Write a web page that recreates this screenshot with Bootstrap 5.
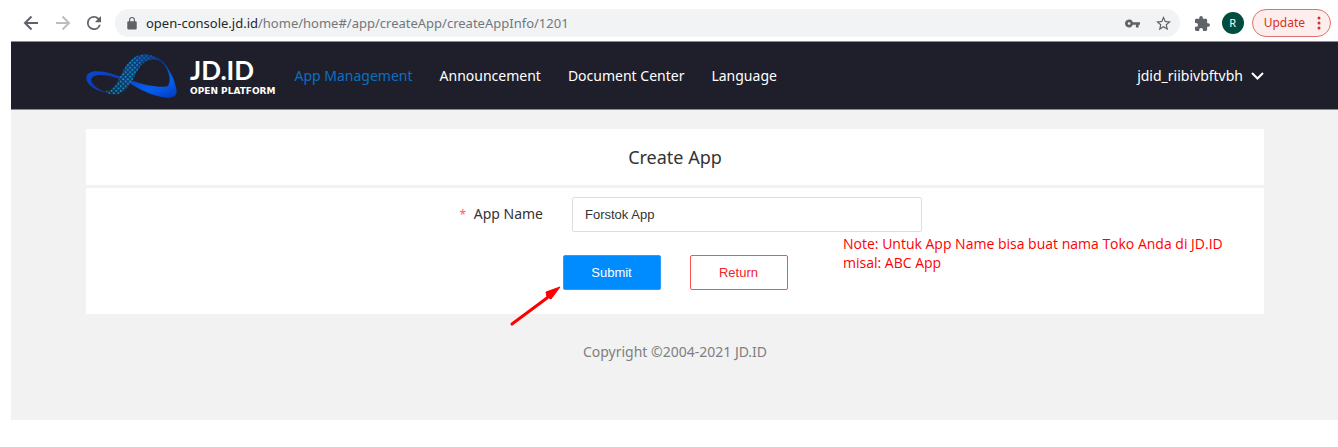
<!DOCTYPE html>
<html lang="en">
<head>
<meta charset="utf-8">
<meta name="viewport" content="width=device-width, initial-scale=1">
<title>Create App - JD.ID Open Platform</title>
<link href="https://cdn.jsdelivr.net/npm/bootstrap@5.3.0/dist/css/bootstrap.min.css" rel="stylesheet">
<style>
  body { font-family: "Noto Sans", "Open Sans", sans-serif; font-size: 14px; line-height: 20px; color: #333; background: #fff; }
  svg { display: block; flex: none; }
  .browser-bar { height: 41px; padding: 5px 7px 0 23px; color: #5f6368; }
  .icon-btn { border: 0; background: none; padding: 0; color: inherit; }
  .icon-btn.dim { color: #bcbec1; }
  .omnibox { height: 28px; background: #f1f3f4; border-radius: 14px; padding: 0 9px 0 11px; }
  .reload { margin-right: 14px; }
  .url-text { font-size: 13px; color: #73777b; }
  .url-text b { font-weight: 400; color: #25282c; }
  .ext-btn { margin: 0 12px 0 15px; }
  .avatar { width: 22px; height: 22px; background: #004d40; color: #fff; font-size: 11px; }
  .update-btn { height: 28px; border: 1px solid #e2706a; border-radius: 14px; background: #fceeed; color: #d93025; font-size: 12px; padding: 0 9px 0 11px; gap: 12px; }
  .site { margin-left: 11px; background: #f2f2f2; padding-bottom: 58px; }
  .site-head { height: 69px; background: #1e1f2b; border-top: 1px solid #8a8b90; border-bottom: 1px solid #8a8b90; padding: 0 74px 0 75px; }
  .brand { color: #fff; text-decoration: none; }
  .brand-name { font: 700 26px/31px Lato, sans-serif; }
  .brand-sub { font: 700 9px/11px "DejaVu Sans", sans-serif; }
  .main-menu { gap: 27px; margin-left: 19px; }
  .main-menu a, .account { color: #fff; text-decoration: none; }
  .main-menu a.active { color: #0b6fc2; }
  .content { padding: 19px 74px 0 75px; }
  .panel-head { background: #fff; height: 56px; font-size: 18px; margin-bottom: 3px; }
  .panel-body { background: #fff; padding: 9px 0 24px; }
  .name-label { width: 115px; text-align: right; color: #333; }
  .star { color: #ff5b5b; font-size: 12px; }
  .field-gap { gap: 29px; }
  .name-input { width: 350px; height: 35px; border: 1px solid #dcdee2; border-radius: 2px; font: 13px "Liberation Sans", sans-serif; color: #333; padding: 0 12px; }
  .form-actions { margin-top: 23px; }
  .form-btn { width: 98px; height: 35px; border-radius: 2px; font: 13px "Liberation Sans", sans-serif; padding: 0; }
  .submit-btn, .submit-btn:hover { background: #008cff; border-color: #2a9dff; color: #fff; }
  .return-btn, .return-btn:hover { background: #fff; border-color: #ff5050; color: #f5222d; }
  .note { left: calc(100% - 79px); top: 37px; color: #f00; font: 14px/19px "Open Sans", sans-serif; white-space: nowrap; }
  .pointer-arrow { right: calc(100% + 2px); top: 31px; }
  .copyright { color: #808080; padding-top: 28px; }
</style>
</head>
<body>
<div class="browser-bar d-flex align-items-center">
  <button class="icon-btn me-3" aria-label="Back"><svg width="16" height="16" viewBox="0 0 16 16" fill="none" stroke="currentColor" stroke-width="2"><path d="M15 8H2.500M8.500 1.500 2 8l6.500 6.500"/></svg></button>
  <button class="icon-btn dim me-3" aria-label="Forward"><svg width="16" height="16" viewBox="0 0 16 16" fill="none" stroke="currentColor" stroke-width="2"><path d="M1 8h12.500M7.500 1.500 14 8l-6.500 6.500"/></svg></button>
  <button class="icon-btn reload" aria-label="Reload"><svg width="14" height="14" viewBox="4 4 16 16" fill="currentColor"><path d="M17.650 6.350A7.960 7.960 0 0 0 12 4a8 8 0 1 0 7.730 10h-2.080A6 6 0 1 1 12 6c1.660 0 3.140.690 4.220 1.780L13 11h7V4z"/></svg></button>
  <div class="omnibox d-flex align-items-center flex-grow-1">
    <svg width="12" height="13" viewBox="3 1 18 22" fill="currentColor"><path d="M18 8h-1V6A5 5 0 0 0 7 6v2H6a2 2 0 0 0-2 2v10c0 1.100.900 2 2 2h12a2 2 0 0 0 2-2V10a2 2 0 0 0-2-2zM8.900 6a3.100 3.100 0 0 1 6.200 0v2H8.900z"/></svg>
    <span class="url-text ms-2 flex-grow-1"><b>open-console.jd.id</b>/home/home#/app/createApp/createAppInfo/1201</span>
    <button class="icon-btn me-3" aria-label="Passwords"><svg width="15" height="9" viewBox="1 6 22 12" fill="currentColor"><path d="M12.650 10a6 6 0 1 0 0 4H17v4h4v-4h2v-4zM7 14a2 2 0 1 1 0-4 2 2 0 0 1 0 4z"/></svg></button>
    <button class="icon-btn" aria-label="Bookmark"><svg width="15" height="15" viewBox="2 2 20 20" fill="currentColor"><path d="M22 9.240l-7.190-.620L12 2 9.190 8.630 2 9.240l5.460 4.730L5.820 21 12 17.270 18.180 21l-1.630-7.030zM12 15.400l-3.760 2.270 1-4.280-3.320-2.880 4.380-.380L12 6.100l1.710 4.040 4.380.380-3.320 2.880 1 4.280z"/></svg></button>
  </div>
  <button class="icon-btn ext-btn" aria-label="Extensions"><svg width="15" height="15" viewBox="2 1 21 21" fill="currentColor"><path d="M20.500 11H19V7a2 2 0 0 0-2-2h-4V3.500a2.500 2.500 0 0 0-5 0V5H4a2 2 0 0 0-2 2v3.800h1.500a2.700 2.700 0 0 1 0 5.400H2V20c0 1.100.900 2 2 2h3.800v-1.500a2.700 2.700 0 0 1 5.400 0V22H17a2 2 0 0 0 2-2v-4h1.500a2.500 2.500 0 0 0 0-5z"/></svg></button>
  <button class="icon-btn avatar rounded-circle me-2" aria-label="Profile R">R</button>
  <button class="update-btn d-flex align-items-center">Update <svg width="4" height="14" viewBox="0 0 4 14" fill="currentColor"><circle cx="2" cy="2" r="1.500"/><circle cx="2" cy="7" r="1.500"/><circle cx="2" cy="12" r="1.500"/></svg></button>
</div>

<div class="site">
  <header class="site-head d-flex align-items-center">
    <a class="brand d-flex align-items-center" href="#">
      <svg width="92" height="46" viewBox="46 37 276 138" role="img" aria-label="JD.ID">
        <defs>
          <linearGradient id="loop" x1="0" x2="1" y1="0" y2="1"><stop offset="0" stop-color="#0657e0"/><stop offset=".4" stop-color="#0b3bb8"/><stop offset=".75" stop-color="#0560ee"/><stop offset="1" stop-color="#0436c0"/></linearGradient>
          <linearGradient id="band" x1="0" x2="1" y1="1" y2="0"><stop offset="0" stop-color="#10304a"/><stop offset=".5" stop-color="#0a4585"/><stop offset="1" stop-color="#0a37a5"/></linearGradient>
          <pattern id="dots" width="14" height="14" patternUnits="userSpaceOnUse"><circle cx="3.500" cy="3.500" r="2.800" fill="#18a4cf"/><circle cx="10.500" cy="10.500" r="2.800" fill="#18a4cf"/></pattern>
          <linearGradient id="fade" x1="0" x2="1"><stop offset=".5" stop-color="#fff"/><stop offset="1" stop-color="#222"/></linearGradient>
          <mask id="dotFade"><path fill="url(#fade)" d="M90 30H280V175H90z"/></mask>
        </defs>
        <path fill="url(#loop)" d="M108 156C75 150 47 133 47 113 47 97 62 91 80 92 115 92 150 110 190 122 225 134 265 142 290 137 302 126 297 100 286 80 277 65 268 60 256 50 287 62 312 112 318 150 318 165 310 171 290 171 255 169 215 150 190 135 160 118 122 103 90 103 70 103 60 110 62 121 66 136 90 150 108 156z"/>
        <path fill="url(#band)" opacity=".8" d="M100 152C125 152 135 134 148 110 165 72 185 43 220 41 245 41 260 50 268 62 250 52 227 56 213 72 190 98 180 150 142 160 125 164 108 160 100 152z"/>
        <path fill="url(#dots)" mask="url(#dotFade)" d="M100 152C125 152 135 134 148 110 165 72 185 43 220 41 245 41 260 50 268 62 250 52 227 56 213 72 190 98 180 150 142 160 125 164 108 160 100 152z"/>
      </svg>
      <span class="d-flex flex-column ms-2 ps-1"><span class="brand-name">JD.ID</span><span class="brand-sub">OPEN PLATFORM</span></span>
    </a>
    <nav class="main-menu d-flex">
      <a class="active" href="#">App Management</a>
      <a href="#">Announcement</a>
      <a href="#">Document Center</a>
      <a href="#">Language</a>
    </nav>
    <a class="account d-flex align-items-center gap-2 ms-auto" href="#">jdid_riibivbftvbh <svg width="13" height="8" viewBox="0 0 13 8" fill="none" stroke="#fff" stroke-width="2"><path d="M1 1l5.500 5.500L12 1"/></svg></a>
  </header>

  <main class="content">
    <h1 class="panel-head d-flex align-items-center justify-content-center fw-normal lh-1">Create App</h1>
    <form class="panel-body" onsubmit="return false">
      <div class="d-flex justify-content-center">
        <div class="field-gap position-relative d-flex align-items-center">
          <label class="name-label" for="appName"><span class="star me-1">*</span> App Name</label>
          <input class="name-input" id="appName" type="text" value="Forstok App">
          <div class="note position-absolute">Note: Untuk App Name bisa buat nama Toko Anda di JD.ID<br>misal: ABC App</div>
        </div>
      </div>
      <div class="form-actions field-gap d-flex justify-content-center">
        <div class="position-relative">
          <button class="btn form-btn submit-btn" type="submit">Submit</button>
          <svg class="pointer-arrow position-absolute" width="52" height="42" viewBox="0 0 52 42"><path d="M3 38 38 12" stroke="#f00" stroke-width="3" stroke-linecap="round"/><path d="M51 1 42 13 38 11 37 6z" fill="#f00" stroke="#f00"/></svg>
        </div>
        <button class="btn form-btn return-btn" type="button">Return</button>
      </div>
    </form>
    <footer class="copyright text-center">Copyright ©2004-2021 JD.ID</footer>
  </main>
</div>
<script src="https://cdn.jsdelivr.net/npm/bootstrap@5.3.0/dist/js/bootstrap.bundle.min.js"></script>
</body>
</html>
